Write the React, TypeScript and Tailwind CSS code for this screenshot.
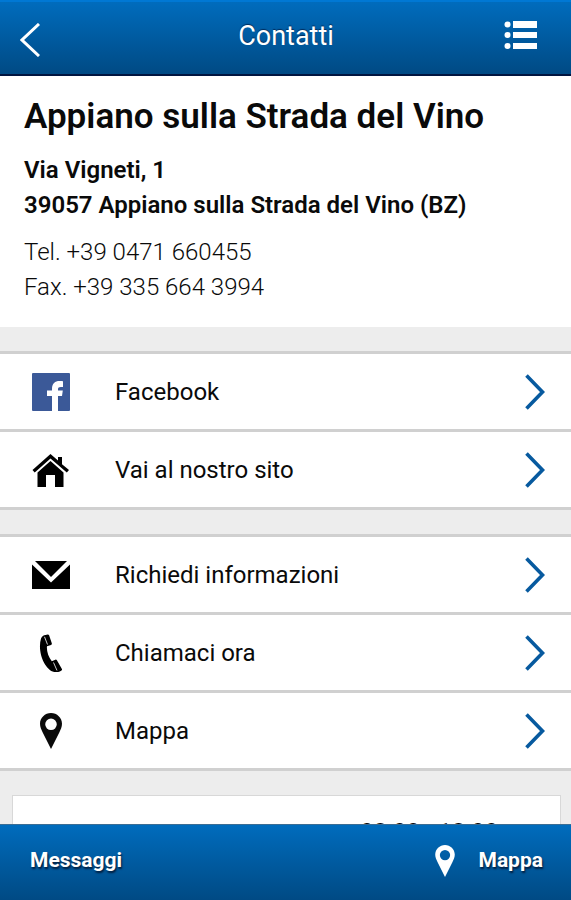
import type { ReactNode } from "react";

const Chevron = () => (
	<svg viewBox="0 0 20 36" className="w-5 h-9 shrink-0" fill="none" stroke="#075a9f" strokeWidth="3.6">
		<path d="M1.5 1.5 17.5 18 1.5 34.5" />
	</svg>
);

const FacebookIcon = () => (
	<svg viewBox="0 0 38 38" className="size-[38px]">
		<rect width="38" height="38" rx="1" fill="#3b5998" />
		<path fill="#fff" d="M20 38V23h-5v-5.500h5V16c0-5.500 3-8 7.500-8 1.500 0 2.700.1 3.500.3V14h-2.200c-2 0-2.800.8-2.800 2.300v1.200h4.800L30 23h-4v15z" />
	</svg>
);

const HomeIcon = () => (
	<svg viewBox="0 0 38 38" className="size-[38px]">
		<path d="M18.500 3 26 9.500V6h4v7.200L37 19l-2.200 2.500L18.500 7.500 2.700 21.500.5 19z" />
		<path d="M18.500 10 31.500 21.500V36H23V24h-9v12H5.500V21.500z" />
	</svg>
);

const MailIcon = () => (
	<svg viewBox="0 0 38 38" className="size-[38px]">
		<path d="M3 5h32L19 21z" />
		<path d="M0 8.500 19 26.500 38 8.500V33H0z" />
	</svg>
);

const PhoneIcon = () => (
	<svg viewBox="0 0 38 38" className="size-[38px]">
		<path d="M9 4.500C10 2 11.500 1.400 13.500 1l2.200-.5q1-.1 1.400.8l2.700 8q.3 1-.8 1.700l-4 1.200c-.6 4 1.200 11 4.800 15l3.500-1.500q1-.4 1.600.5l5 8.800q.4.900-.4 1.500-3 2-6.200 1.700C13 37 5 18 9 4.500z" />
		<path d="M12.500 2.800 15.500 10.500M21.500 28.500l3.500 8" fill="none" stroke="#fff" strokeWidth=".8" />
	</svg>
);

const PinIcon = ({ className }: { className: string }) => (
	<svg viewBox="0 0 22 36" className={className} fill="currentColor" fillRule="evenodd">
		<path d="M11 0c6 0 11 4.800 11 10.800 0 3-1.300 5.800-2.700 8.700L11 36 2.700 19.500C1.300 16.600 0 13.800 0 10.800 0 4.800 5 0 11 0zm0 5.500a5.800 5.800 0 1 0 0 11.600 5.800 5.800 0 0 0 0-11.600z" />
	</svg>
);

const List = ({ children }: { children: ReactNode }) => (
	<ul className="mt-6 bg-white border-y-3 border-[#d0d0d0] divide-y-3 divide-[#d0d0d0]">{children}</ul>
);

const Row = ({ icon, label }: { icon: ReactNode; label: string }) => (
	<li>
		<a href="#" className="flex items-center h-[75px] pl-8 pr-[26px]">
			<span className="flex justify-center w-[38px] mr-[45px]">{icon}</span>
			<span className="flex-1 text-2xl">{label}</span>
			<Chevron />
		</a>
	</li>
);

const App = () => {
	return (
		<div className="flex flex-col h-screen bg-[#ededed] text-[#0a0a0a] font-[Roboto,sans-serif]">
			<header className="grid grid-cols-[1fr_auto_1fr] items-center shrink-0 h-[76px] pl-5 pr-[33px] pb-1 border-t-2 border-t-[#0078d4] border-b-2 border-b-[#001540] bg-linear-to-b from-[#006cbd] to-[#004a84] text-white">
				<button aria-label="Indietro" className="w-9 pt-2">
					<svg viewBox="0 0 20 34" className="w-5 h-[34px]" fill="none" stroke="currentColor" strokeWidth="3">
						<path d="M19 1 2 17 19 33" />
					</svg>
				</button>
				<h1 className="pl-[14px] text-[27px] text-shadow-[0_-1px_1px_#002c5c]">Contatti</h1>
				<button aria-label="Menu" className="justify-self-end">
					<svg viewBox="0 0 34 30" className="w-[34px] h-[30px]" fill="currentColor">
						<path d="M9 0h24v7H9zM9 11h24v6H9zM9 22h24v6H9z" />
						<circle cx="3.500" cy="3.500" r="3" />
						<circle cx="3.500" cy="14" r="3" />
						<circle cx="3.500" cy="25" r="3" />
					</svg>
				</button>
			</header>

			<main className="flex-1 min-h-0 overflow-hidden">
				<section className="px-6 pt-[17px] pb-[22px] bg-white">
					<h2 className="text-[35px] leading-[48px] font-semibold">Appiano sulla Strada del Vino</h2>
					<p className="mt-3 text-2xl leading-[35px] font-semibold">
						Via Vigneti, 1<br />
						39057 Appiano sulla Strada del Vino (BZ)
					</p>
					<p className="mt-3 text-2xl leading-[35px] font-light">
						Tel. +39 0471 660455<br />
						Fax. +39 335 664 3994
					</p>
				</section>

				<List>
					<Row icon={<FacebookIcon />} label="Facebook" />
					<Row icon={<HomeIcon />} label="Vai al nostro sito" />
				</List>

				<List>
					<Row icon={<MailIcon />} label="Richiedi informazioni" />
					<Row icon={<PhoneIcon />} label="Chiamaci ora" />
					<Row icon={<PinIcon className="w-[22px] h-9" />} label="Mappa" />
				</List>

				<section className="mt-6 ml-3 mr-[10px] pt-5 pr-[62px] h-24 bg-white border border-[#d8d8d8] text-2xl text-right">
					08:00 - 18:00
				</section>
			</main>

			<footer className="flex items-center justify-between shrink-0 h-[76px] pl-[30px] pr-7 pb-1 border-t border-[#3b6d94] bg-linear-to-b from-[#006cbd] to-[#004a84] text-white text-[21px] font-bold">
				<button className="text-shadow-[1px_2px_2px_#001c3c]">Messaggi</button>
				<button className="flex items-center gap-6 text-shadow-[1px_2px_2px_#001c3c]">
					<PinIcon className="w-5 h-8" />
					Mappa
				</button>
			</footer>
		</div>
	);
};

export default App;
